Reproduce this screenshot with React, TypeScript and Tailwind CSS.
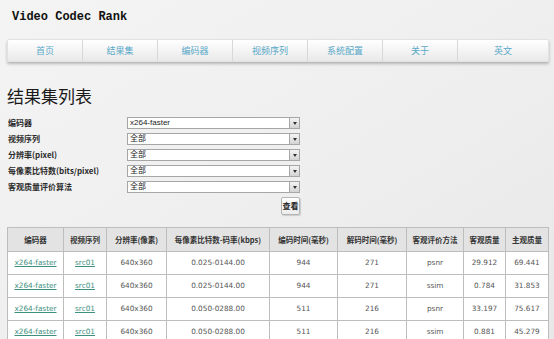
const navItems = ["首页", "结果集", "编码器", "视频序列", "系统配置", "关于", "英文"];

const filters = [
  { label: "编码器", value: "x264-faster" },
  { label: "视频序列", value: "全部" },
  { label: "分辨率(pixel)", value: "全部" },
  { label: "每像素比特数(bits/pixel)", value: "全部" },
  { label: "客观质量评价算法", value: "全部" },
];

const columns = [
  { title: "编码器", w: 56 },
  { title: "视频序列", w: 43 },
  { title: "分辨率(像素)", w: 60 },
  { title: "每像素比特数-码率(kbps)", w: 103 },
  { title: "编码时间(毫秒)", w: 68 },
  { title: "解码时间(毫秒)", w: 69 },
  { title: "客观评价方法", w: 57 },
  { title: "客观质量", w: 42 },
  { title: "主观质量", w: 43 },
];

const rows = [
  ["x264-faster", "src01", "640x360", "0.025-0144.00", "944", "271", "psnr", "29.912", "69.441"],
  ["x264-faster", "src01", "640x360", "0.025-0144.00", "944", "271", "ssim", "0.784", "31.853"],
  ["x264-faster", "src01", "640x360", "0.050-0288.00", "511", "216", "psnr", "33.197", "75.617"],
  ["x264-faster", "src01", "640x360", "0.050-0288.00", "511", "216", "ssim", "0.881", "45.279"],
];

const cjk = "font-['Noto_Sans_CJK_SC',sans-serif]";

const App = () => {
  return (
    <div className="w-[554px] h-[339px] overflow-hidden bg-gradient-to-br from-[#f4f4f4] via-[#f0efef] to-[#e9e8e8]">
      {/* Title */}
      <div className="pl-[12px] pt-[10px] leading-[14px] text-[12px] font-bold text-[#111] font-['Liberation_Mono',monospace]">
        Video Codec Rank
      </div>

      {/* Nav */}
      <div className="ml-[7px] mt-[15px] w-[542px] h-[23px] flex rounded-[2px] bg-gradient-to-b from-white to-[#e9e9e9] shadow-[0_2px_3px_rgba(0,0,0,0.25)] border border-[#e2e2e2]">
        {navItems.map((item, i) => (
          <div
            key={item}
            className={`${i === navItems.length - 1 ? "flex-1" : "w-[75px] border-r border-[#d8d8d8]"} flex items-center justify-center text-[9px] text-[#58a8c8] ${cjk}`}
          >
            {item}
          </div>
        ))}
      </div>

      {/* Heading */}
      <h1 className={`ml-[7px] mt-[24px] leading-[20px] text-[17px] text-[#1a1a1a] ${cjk}`}>结果集列表</h1>

      {/* Filters */}
      <div className="ml-[8px] mt-[11px] w-[292px] flex flex-col gap-[4px]">
        {filters.map((f) => (
          <div key={f.label} className="flex items-center h-[12px]">
            <div className={`w-[119px] text-[8px] font-bold text-[#2a2a2a] ${cjk}`}>{f.label}</div>
            <div className="flex-1 h-[12px] flex bg-white border border-[#a6a6a6]">
              <div className="flex-1 flex items-center pl-[2px] text-[8px] text-[#222] font-['Liberation_Sans','Noto_Sans_CJK_SC',sans-serif]">
                {f.value}
              </div>
              <div className="w-[10px] h-full flex items-center justify-center bg-gradient-to-b from-[#f4f4f4] to-[#d4d4d4] border-l border-[#a6a6a6]">
                <div className="w-0 h-0 border-l-[2.5px] border-r-[2.5px] border-t-[3px] border-l-transparent border-r-transparent border-t-[#333]" />
              </div>
            </div>
          </div>
        ))}
        <div className="flex justify-end">
          <button
            className={`w-[19px] h-[18px] rounded-[2px] border border-[#b5b5b5] bg-gradient-to-b from-white to-[#ececec] shadow-[1px_1px_1px_rgba(0,0,0,0.15)] text-[8px] font-bold text-[#222] ${cjk}`}
          >
            查看
          </button>
        </div>
      </div>

      {/* Table */}
      <table className="ml-[7px] mt-[12px] w-[541px] table-fixed border-collapse bg-white">
        <colgroup>
          {columns.map((c) => (
            <col key={c.title} style={{ width: c.w }} />
          ))}
        </colgroup>
        <thead>
          <tr className="h-[24px] bg-[#e3e3e3]">
            {columns.map((c) => (
              <th
                key={c.title}
                className={`border border-[#bdbdbd] text-[7.5px] font-bold text-[#333] whitespace-nowrap ${cjk}`}
              >
                {c.title}
              </th>
            ))}
          </tr>
        </thead>
        <tbody>
          {rows.map((r, ri) => (
            <tr key={ri} className="h-[23px]">
              {r.map((cell, ci) => (
                <td
                  key={ci}
                  className="border border-[#bdbdbd] text-center text-[7.3px] text-[#555] font-['DejaVu_Sans',sans-serif] whitespace-nowrap"
                >
                  {ci < 2 ? <a className="text-[#3e8f80] underline">{cell}</a> : cell}
                </td>
              ))}
            </tr>
          ))}
        </tbody>
      </table>
    </div>
  );
};

export default App;
